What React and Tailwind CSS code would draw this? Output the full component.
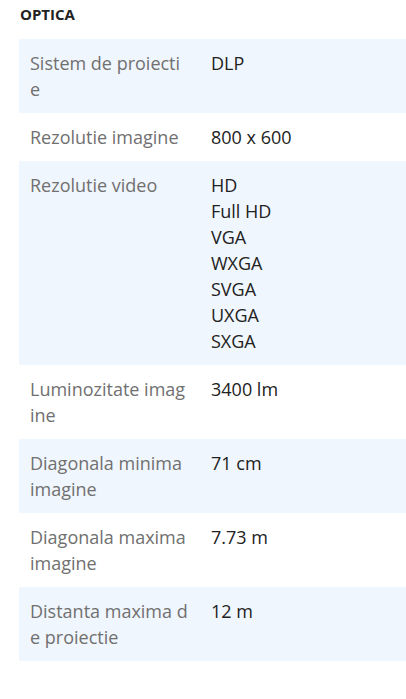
const specs = [
  { label: "Sistem de proiectie", values: ["DLP"] },
  { label: "Rezolutie imagine", values: ["800 x 600"] },
  {
    label: "Rezolutie video",
    values: ["HD", "Full HD", "VGA", "WXGA", "SVGA", "UXGA", "SXGA"],
  },
  { label: "Luminozitate imagine", values: ["3400 lm"] },
  { label: "Diagonala minima imagine", values: ["71 cm"] },
  { label: "Diagonala maxima imagine", values: ["7.73 m"] },
  { label: "Distanta maxima de proiectie", values: ["12 m"] },
];

export default function App() {
  return (
    <div
      className="w-[406px] h-[699px] bg-white overflow-hidden"
      style={{ fontFamily: '"Open Sans", sans-serif' }}
    >
      <h2 className="pl-[20px] pt-[4px] h-[39px] text-[15px] leading-[20px] font-bold text-[#222]">
        OPTICA
      </h2>

      <div className="ml-[19px]">
        {specs.map((spec, index) => (
          <div
            key={spec.label}
            className={`grid grid-cols-[192px_1fr] py-[11px] text-[18px] leading-[26px] ${
              index % 2 === 0 ? "bg-[#f0f6fd]" : "bg-white"
            }`}
          >
            <div className="pl-[11px] pr-[22px] text-[#707070] break-all">
              {spec.label}
            </div>
            <div className="text-[#222]">
              {spec.values.map((v) => (
                <div key={v}>{v}</div>
              ))}
            </div>
          </div>
        ))}
      </div>
    </div>
  );
}
